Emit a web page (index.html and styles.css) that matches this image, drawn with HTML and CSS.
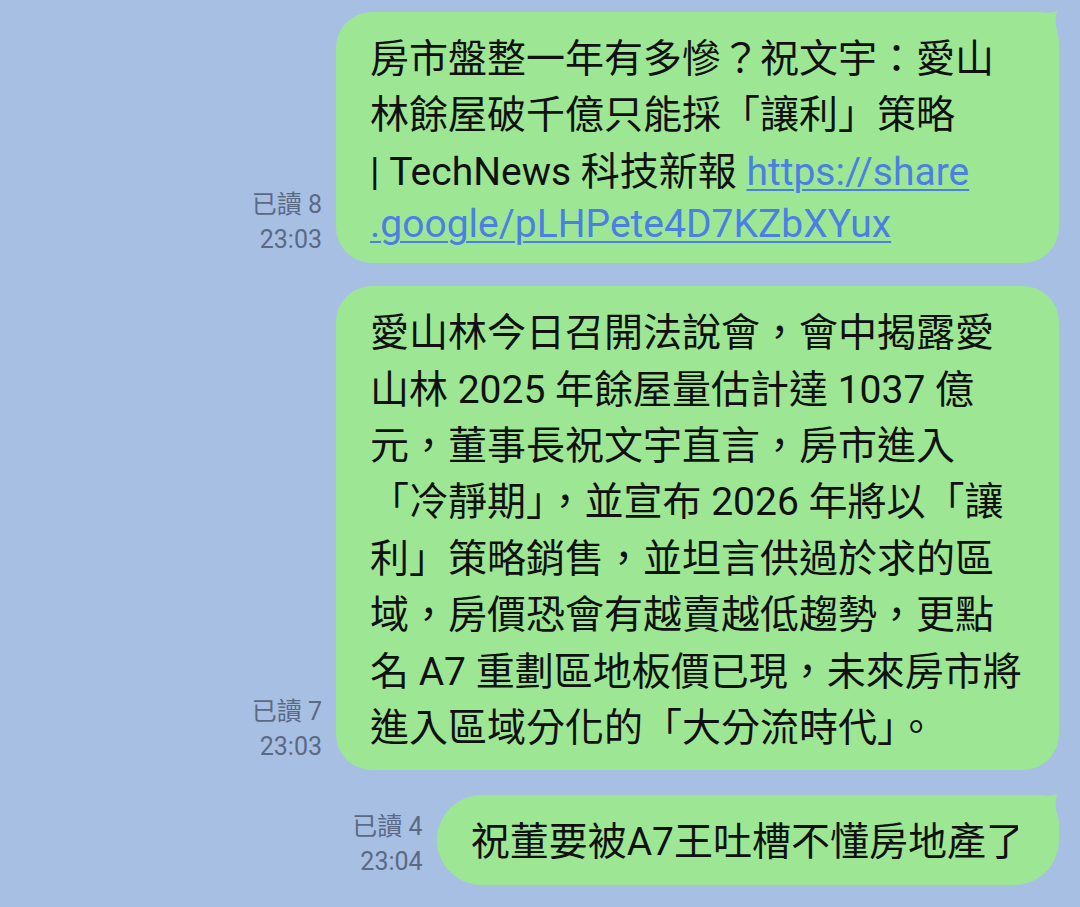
FILE: index.html
```html
<!DOCTYPE html>
<html lang="zh-Hant">
<head>
    <meta charset="UTF-8">
    <meta name="viewport" content="width=device-width, initial-scale=1.0">
    <title>聊天</title>
    <link rel="stylesheet" href="styles.css">
</head>
<body>
    <div class="chat">
        <div class="row">
            <div class="meta">
                <span>已讀 8</span>
                <span>23:03</span>
            </div>
            <div class="bubble long">
                <svg class="tail" viewBox="0 0 44 44"><path d="M0 2H22Q32 4 39 1Q36 12 39 20Q41 26 41 34V44H0Z"/></svg>
                <p class="text">房市盤整一年有多慘？祝文宇：愛山<br>林餘屋破千億只能採「讓利」策略<br>| TechNews 科技新報 <a href="#">https://share</a></p>
                <p class="text url-line"><a href="#">.google/pLHPete4D7KZbXYux</a></p>
            </div>
        </div>

        <div class="row">
            <div class="meta">
                <span>已讀 7</span>
                <span>23:03</span>
            </div>
            <div class="bubble long">
                <p class="text">愛山林今日召開法說會，會中揭露愛<br>山林 2025 年餘屋量估計達 1037 億<br>元，董事長祝文宇直言，房市進入<br>「冷靜期」，並宣布 2026 年將以「讓<br>利」策略銷售，並坦言供過於求的區<br>域，房價恐會有越賣越低趨勢，更點<br>名 A7 重劃區地板價已現，未來房市將<br>進入區域分化的「大分流時代」。</p>
            </div>
        </div>

        <!-- 新的一分鐘，重新帶尾巴 -->
        <div class="row group">
            <div class="meta">
                <span>已讀 4</span>
                <span>23:04</span>
            </div>
            <div class="bubble pill">
                <svg class="tail" viewBox="0 0 44 44"><path d="M0 2H22Q32 4 39 1Q36 12 39 20Q41 26 41 34V44H0Z"/></svg>
                <p class="text">祝董要被A7王吐槽不懂房地產了</p>
            </div>
        </div>
    </div>
</body>
</html>
```

FILE: styles.css
```css
body {
    margin: 0;
    width: 1080px;
    height: 907px;
    overflow: hidden;
    background-color: #a8bfe4;
    font-family: Roboto, "Noto Sans CJK TC", sans-serif;
}
.chat {
    padding: 12px 21px 0 0;
}
.row {
    display: flex;
    justify-content: flex-end;
    align-items: flex-end;
    gap: 14px;
    margin-top: 23px;
}
.row:first-child {
    margin-top: 0;
}
.row.group {
    margin-top: 25px;
}
.meta {
    display: flex;
    flex-direction: column;
    align-items: flex-end;
    padding-bottom: 6px;
    font-size: 25px;
    line-height: 35px;
    color: #5b6a84;
}
.bubble {
    position: relative;
    box-sizing: border-box;
    padding: 19px 34px 14px 34px;
    background-color: #9de794;
    border-radius: 36px;
    color: #111;
}
.bubble.long {
    width: 723px;
}
.bubble.pill {
    border-radius: 45px;
}
.text {
    margin: 0;
    font-size: 39px;
    line-height: 56.4px;
}
.text.url-line {
    line-height: 49px;
}
.text a {
    color: #4b7fe3;
    text-decoration: underline;
    text-decoration-thickness: 2px;
    text-underline-offset: 4px;
}
/* 右上角的小尾巴 */
.tail {
    position: absolute;
    top: -2px;
    right: -3px;
    width: 44px;
    height: 44px;
    fill: #9de794;
}
```
